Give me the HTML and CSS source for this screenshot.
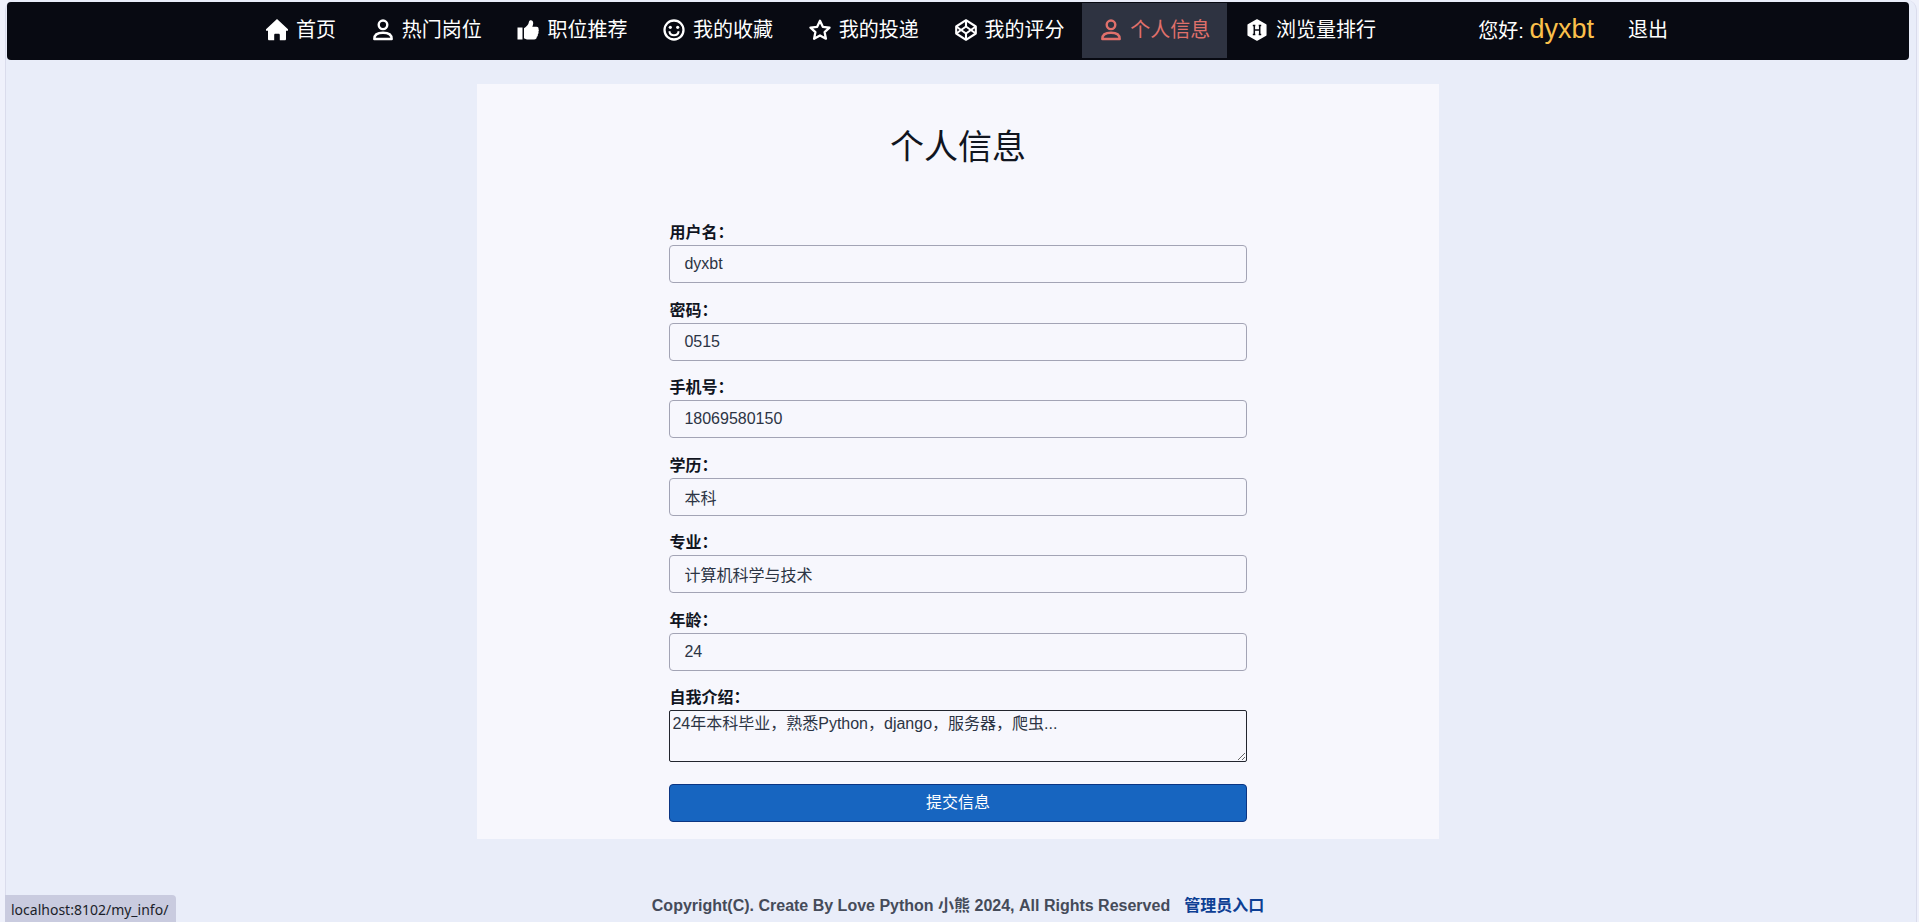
FILE: index.html
```html
<!DOCTYPE html>
<html lang="zh-CN">
<head>
<meta charset="utf-8">
<title>个人信息</title>
<link rel="stylesheet" href="styles.css">
</head>
<body>
<div class="page">
    <header class="navbar">
        <div class="navbar-inner">
            <nav class="menu">
                <a href="#"><svg class="icon" viewBox="0 0 22 22"><path fill="currentColor" d="M11 0 22 10.300c.6.600.3 1.500-.6 1.500h-1.400v8.200c0 .8-.5 1.300-1.300 1.300h-4.900v-5.300c0-.8-.5-1.300-1.300-1.300H9.500c-.8 0-1.300.5-1.300 1.300v5.300H3.300c-.8 0-1.300-.5-1.300-1.300v-8.200H.6c-.9 0-1.200-.9-.6-1.500z"/></svg>首页</a>
                <a href="#"><svg class="icon" viewBox="0 0 22 22"><g fill="none" stroke="currentColor" stroke-width="2.400"><circle cx="11" cy="5.800" r="4.300"/><path stroke-linejoin="round" d="M2.300 20c0-4 3.500-6.200 8.700-6.200s8.700 2.200 8.700 6.200z"/></g></svg>热门岗位</a>
                <a href="#"><svg class="icon" viewBox="0 0 22 22"><path fill="currentColor" d="M.5 8.500h5v12h-5zM7 9.200c2.500-1.300 4.500-3.500 4.900-6.200.2-1.300 1-1.900 2-1.800 1.700.2 2.500 1.700 2.300 3.300-.1 1.200-.5 2.200-.9 3.200h4.200c1.700 0 2.400 1.300 2 2.600.5.700.5 1.700-.1 2.500.4 1 .1 2-.6 2.600.2 1-.2 1.900-1 2.400 0 1.700-1 2.700-2.600 2.700h-5.700c-1.700 0-3.100-.5-4.500-1.300z"/></svg>职位推荐</a>
                <a href="#"><svg class="icon" viewBox="0 0 22 22"><circle cx="11" cy="11" r="9.500" fill="none" stroke="currentColor" stroke-width="2.300"/><circle cx="7.300" cy="8.300" r="1.600" fill="currentColor"/><circle cx="14.700" cy="8.300" r="1.600" fill="currentColor"/><path d="M6.300 12.200c.5 2.700 2.300 4.100 4.700 4.100s4.200-1.400 4.700-4.100" fill="none" stroke="currentColor" stroke-width="2"/></svg>我的收藏</a>
                <a href="#"><svg class="icon" viewBox="0 0 22 22"><path d="m11 1.800 2.800 6 6.700.8-4.900 4.500 1.300 6.600L11 16.400l-5.900 3.300 1.300-6.600-4.900-4.500 6.700-.8z" fill="none" stroke="currentColor" stroke-width="2.300" stroke-linejoin="round"/></svg>我的投递</a>
                <a href="#"><svg class="icon" viewBox="0 0 22 22"><g fill="none" stroke="currentColor" stroke-width="2.100" stroke-linejoin="round"><path d="M11 1.200 20.800 7.500v7L11 20.800 1.200 14.500v-7z"/><path d="M11 1.200v6.300M11 14.500v6.300M1.200 7.500 11 14.500l9.800-7M1.200 14.500 11 7.500l9.800 7"/></g></svg>我的评分</a>
                <a href="#" class="active"><svg class="icon" viewBox="0 0 22 22"><g fill="none" stroke="currentColor" stroke-width="2.400"><circle cx="11" cy="5.800" r="4.300"/><path stroke-linejoin="round" d="M2.300 20c0-4 3.500-6.200 8.700-6.200s8.700 2.200 8.700 6.200z"/></g></svg>个人信息</a>
                <a href="#"><svg class="icon" viewBox="0 0 22 22"><path fill="currentColor" stroke="currentColor" stroke-width="1.500" stroke-linejoin="round" d="m11 1 8.800 5v10L11 21l-8.800-5V6z"/><path d="M8.300 6.500v9M13.700 6.500v9M8.300 11h5.400M6.800 6.500h2.500M12.700 6.500h2.500M6.800 15.500h2.500M12.700 15.500h2.500" fill="none" stroke="#080a12" stroke-width="1.500"/></svg>浏览量排行</a>
            </nav>
            <div class="user">
                <span>您好: <span class="user-name">dyxbt</span></span>
                <a href="#">退出</a>
            </div>
        </div>
    </header>

    <main class="card">
        <h1>个人信息</h1>
        <form class="info-form">
            <div class="fields">
                <div class="field">
                    <label for="username">用户名：</label>
                    <input type="text" id="username" value="dyxbt">
                </div>
                <div class="field">
                    <label for="password">密码：</label>
                    <input type="text" id="password" value="0515">
                </div>
                <div class="field">
                    <label for="phone">手机号：</label>
                    <input type="text" id="phone" value="18069580150">
                </div>
                <div class="field">
                    <label for="education">学历：</label>
                    <input type="text" id="education" value="本科">
                </div>
                <div class="field">
                    <label for="major">专业：</label>
                    <input type="text" id="major" value="计算机科学与技术">
                </div>
                <div class="field">
                    <label for="age">年龄：</label>
                    <input type="text" id="age" value="24">
                </div>
                <div class="field">
                    <label for="intro">自我介绍：</label>
                    <textarea id="intro">24年本科毕业，熟悉Python，django，服务器，爬虫...</textarea>
                </div>
            </div>
            <button type="submit">提交信息</button>
        </form>
    </main>

    <footer>
        <span>Copyright(C). Create By Love Python 小熊 2024, All Rights Reserved</span>
        <a href="#">管理员入口</a>
    </footer>
</div>
<div class="status">localhost:8102/my_info/</div>
</body>
</html>
```

FILE: styles.css
```css
* {
    box-sizing: border-box;
}

body {
    margin: 0;
    background: #eff1fb;
    color: #11151f;
    font: 16px/24px "Liberation Sans", "Noto Sans CJK SC", sans-serif;
}

a {
    text-decoration: none;
}

.page {
    min-height: 100vh;
    margin: 0 2px 0 5px;
    padding: 2px 7px 0 1px;
    border: 1px solid #dadcec;
    border-width: 0 1px;
    border-radius: 10px 10px 0 0;
    background: #e9edf9;
}

/* top bar */
.navbar {
    padding: 1px 0 2px;
    border-radius: 4px;
    background: #080a12;
    color: #fff;
    font-size: 20px;
}

.navbar-inner {
    display: flex;
    max-width: 1440px;
    margin: 0 auto;
    padding: 0 10px;
    justify-content: space-between;
    align-items: center;
}

.navbar a {
    color: #fff;
}

.menu {
    display: flex;
    flex: 0 1 1145px;
    justify-content: space-between;
}

.menu a {
    display: flex;
    align-items: center;
    gap: 8px;
    height: 55px;
    padding: 0 17px 2px 18px;
    white-space: nowrap;
}

.navbar .active {
    background: #2e3341;
    color: #e0706b;
}

.icon {
    width: 22px;
    height: 22px;
}

.user {
    display: flex;
    align-items: center;
    gap: 34px;
    padding-bottom: 2px;
    white-space: nowrap;
}

.user-name {
    color: #fbc04b;
    font-size: 27px;
}

/* form card */
.card {
    max-width: 962px;
    margin: 24px auto 0;
    padding: 43px 0 17px;
    background: #f7f7fd;
}

h1 {
    margin: 0 0 54px;
    font-size: 34px;
    font-weight: 400;
    line-height: 40px;
    text-align: center;
}

.info-form {
    width: 60%;
    margin: 0 auto;
}

.fields {
    display: flex;
    flex-direction: column;
    justify-content: space-between;
    min-height: 541px;
}

.field label {
    display: block;
    font-weight: 700;
}

input,
textarea,
button {
    display: block;
    width: 100%;
    font: inherit;
}

input {
    height: 38px;
    padding: 0 14px;
    border: 1px solid #a3a4b5;
    border-radius: 4px;
    background: transparent;
    color: #2c3444;
}

textarea {
    height: 52px;
    padding: 1px 2px;
    border: 1px solid #22252e;
    border-radius: 2px;
    background: transparent;
    color: #2c3444;
}

button {
    height: 38px;
    margin-top: 22px;
    border: 1px solid #0b3583;
    border-radius: 4px;
    background: #1765c0;
    color: #fff;
}

footer {
    display: flex;
    justify-content: center;
    gap: 14px;
    margin-top: 55px;
    color: #454b59;
    font-weight: 700;
}

footer a {
    color: #0d3f94;
}

/* link target shown in the corner */
.status {
    position: fixed;
    left: 5px;
    bottom: 0;
    padding: 3px 8px 0 6px;
    border-radius: 0 4px 0 0;
    background: #c9cbdf;
    color: #1b1e29;
    font-family: "Noto Sans", sans-serif;
    font-size: 14px;
}
```
